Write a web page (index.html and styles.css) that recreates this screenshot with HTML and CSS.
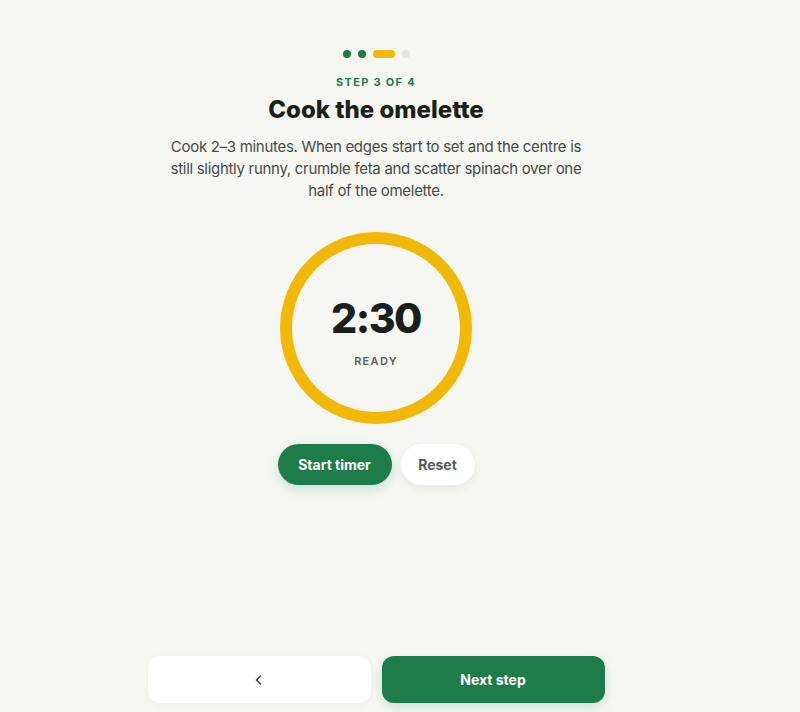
FILE: index.html
```html
<!DOCTYPE html>
<html lang="en">
<head>
    <meta charset="UTF-8">
    <meta name="viewport" content="width=device-width, initial-scale=1.0">
    <title>Cook mode</title>

    <link rel="stylesheet" href="styles.css">
</head>
<body>

    <div class="screen">
        <main class="step">
            <div class="progress">
                <span class="dot done"></span>
                <span class="dot done"></span>
                <span class="dot current"></span>
                <span class="dot"></span>
            </div>

            <p class="step-label">STEP 3 OF 4</p>
            <h1 class="step-title">Cook the omelette</h1>
            <p class="step-text">Cook 2–3 minutes. When edges start to set and the centre is still slightly runny, crumble feta and scatter spinach over one half of the omelette.</p>

            <div class="timer">
                <div class="timer-time">2:30</div>
                <div class="timer-state">READY</div>
            </div>

            <div class="timer-actions">
                <button class="pill pill-green">Start timer</button>
                <button class="pill pill-white">Reset</button>
            </div>
        </main>

        <footer class="nav">
            <button class="nav-btn nav-back" aria-label="Previous step">
                <svg width="14" height="14" viewBox="0 0 14 14" fill="none">
                    <path d="M8.5 3 L4.5 7 L8.5 11" stroke="#3a3d3a" stroke-width="1.6" stroke-linecap="round" stroke-linejoin="round"/>
                </svg>
            </button>
            <button class="nav-btn nav-next">Next step</button>
        </footer>
    </div>

</body>
</html>
```

FILE: styles.css
```css
*{
    margin: 0;padding: 0;
    box-sizing: border-box;
}

body{
    background: #f6f7f3;
    font-family: Inter, "Noto Sans", sans-serif;
    color: #1c201d;
}

.screen{
    width: 752px;
    min-height: 100vh;
    display: flex;
    flex-direction: column;
    align-items: center;
}

.step{
    flex: 1;
    display: flex;
    flex-direction: column;
    align-items: center;
    padding-top: 50px;
}

.progress{
    display: flex;
    gap: 7px;
}

.dot{
    width: 8px;height: 8px;
    border-radius: 4px;
    background: #e3e5e0;
}

.dot.done{
    background: #1e7b4a;
}

.dot.current{
    width: 22px;
    background: #f2b807;
}

.step-label{
    margin-top: 17px;
    font-size: 11px;
    font-weight: 700;
    letter-spacing: 1.3px;
    color: #1e7b4a;
}

.step-title{
    margin-top: 6px;
    font-size: 24px;
    font-weight: 800;
    letter-spacing: 0;
    color: #1b1f1c;
}

.step-text{
    margin-top: 12px;
    width: 420px;
    text-align: center;
    font-size: 15px;
    line-height: 22px;
    letter-spacing: -0.3px;
    color: #474a47;
}

.timer{
    margin-top: 30px;
    width: 192px;height: 192px;
    border-radius: 50%;
    border: 12px solid #f2b807;
    display: flex;
    flex-direction: column;
    align-items: center;
    justify-content: center;
}

.timer-time{
    margin-top: 10px;
    font-size: 41px;
    font-weight: 800;
    letter-spacing: -1.5px;
    color: #1b1f1c;
    line-height: 1;
}

.timer-state{
    margin-top: 15px;
    font-size: 11px;
    font-weight: 600;
    letter-spacing: 1.3px;
    color: #5c605c;
}

.timer-actions{
    margin-top: 20px;
    display: flex;
    gap: 9px;
}

.pill{
    height: 41px;
    border: none;
    border-radius: 21px;
    font-family: Inter, sans-serif;
    font-size: 14px;
    font-weight: 700;
}

.pill-green{
    width: 114px;
    background: #1e7b4a;
    color: #fff;
    box-shadow: 0 4px 12px rgba(30, 123, 74, 0.2);
}

.pill-white{
    width: 74px;
    background: #fff;
    color: #555955;
    box-shadow: 0 3px 10px rgba(0, 0, 0, 0.07);
}

.nav{
    display: flex;
    gap: 11px;
    padding-bottom: 9px;
}

.nav-btn{
    width: 223px;height: 47px;
    border: none;
    border-radius: 12px;
    font-family: Inter, sans-serif;
    font-size: 14px;
    font-weight: 700;
}

.nav-back{
    background: #fff;
    display: flex;
    align-items: center;
    justify-content: center;
    box-shadow: 0 2px 8px rgba(0, 0, 0, 0.04);
}

.nav-next{
    background: #1e7b4a;
    color: #fff;
    box-shadow: 0 4px 12px rgba(30, 123, 74, 0.18);
}
```
